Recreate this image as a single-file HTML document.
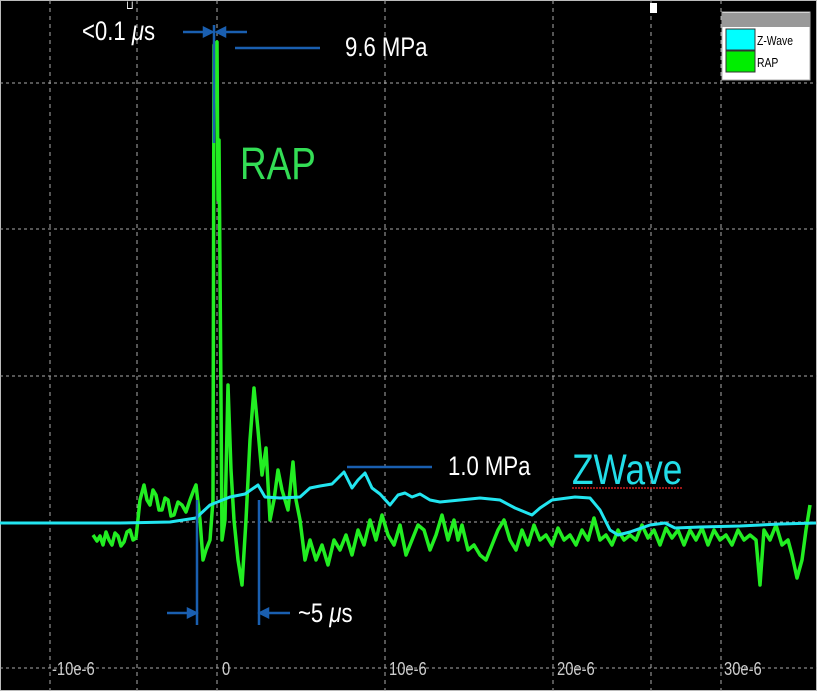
<!DOCTYPE html>
<html><head><style>
html,body{margin:0;padding:0;background:#000;}
body{width:817px;height:691px;overflow:hidden;position:relative;font-family:"Liberation Sans",sans-serif;}
.t{position:absolute;color:#fff;white-space:nowrap;transform:scaleX(0.82);transform-origin:left top;}
</style></head><body>
<svg width="817" height="691" style="position:absolute;left:0;top:0">
<rect x="0.5" y="0.5" width="816" height="690" fill="#000" stroke="#bbb"/>
<g stroke="#aaa" stroke-width="1" stroke-dasharray="4,4">
<line x1="50" y1="0" x2="50" y2="691"/><line x1="137" y1="0" x2="137" y2="691"/>
<line x1="217" y1="0" x2="217" y2="691"/><line x1="385" y1="0" x2="385" y2="691"/>
<line x1="553" y1="0" x2="553" y2="691"/><line x1="651" y1="0" x2="651" y2="691"/>
<line x1="721" y1="0" x2="721" y2="691"/>
</g>
<g stroke="#aaa" stroke-width="1" stroke-dasharray="3,3">
<line x1="0" y1="83" x2="817" y2="83"/><line x1="0" y1="229" x2="817" y2="229"/>
<line x1="0" y1="376" x2="817" y2="376"/><line x1="0" y1="522" x2="817" y2="522"/>
<line x1="0" y1="668" x2="817" y2="668"/>
</g>
<polyline fill="none" stroke="#22ee22" stroke-width="3.5" stroke-linejoin="round" points="93,535 97,541 100,536 103,545 106,532 109,540 112,545 115,533 118,536 121,546 124,542 127,532 130,530 133,540 136,538 140,500 144,485 147,500 150,505 153,490 156,495 159,510 162,510 165,498 168,500 171,516 174,515 178,502 182,505 186,512 190,500 193,492 196,485 200,520 203,560 206,550 210,540 213,500 214,45 217,42 218,200 219,140 221,400 222,540 225,520 228,385 231,470 234,520 238,560 242,585 246,520 250,440 254,388 258,430 262,475 266,448 270,520 274,500 278,470 282,490 288,510 293,462 296,500 300,520 305,560 310,540 316,560 322,545 328,565 334,540 340,550 346,535 352,555 358,530 364,545 370,520 376,540 382,515 388,535 394,545 400,525 406,555 412,540 418,525 424,530 430,550 436,535 442,515 448,540 454,520 458,540 462,525 468,550 474,545 480,555 486,560 492,545 498,530 504,520 510,540 516,550 522,530 528,545 534,525 540,540 546,535 552,545 558,528 564,540 570,535 576,545 582,530 588,540 594,518 600,540 606,535 612,545 618,530 624,540 630,535 636,540 642,525 648,538 654,530 660,545 666,528 672,538 678,530 684,545 690,530 696,540 702,528 708,545 714,530 720,540 726,535 732,545 738,530 744,540 750,535 756,540 760,585 764,530 770,540 776,525 782,545 788,540 792,555 797,578 802,560 806,530 810,505"/>
<polyline fill="none" stroke="#22e5f0" stroke-width="3" stroke-linejoin="round" points="0,523 120,523 170,522 196,518 210,505 230,497 245,494 258,485 265,497 280,498 300,497 310,488 320,486 332,484 344,472 352,488 358,480 365,473 372,488 380,494 390,505 398,495 405,493 412,497 420,494 430,500 440,502 460,500 480,498 500,500 515,508 532,515 540,508 552,500 575,497 590,498 600,510 610,530 618,535 630,532 650,525 665,523 675,528 700,527 740,526 780,524 816,523"/>
<g stroke="#1a5fb0" stroke-width="2.5" fill="#1a5fb0">
<line x1="214" y1="25" x2="214" y2="143"/>
<line x1="183" y1="32" x2="210" y2="32"/><polygon points="212,32 204,28 204,36"/>
<line x1="222" y1="32" x2="247" y2="32"/><polygon points="217,32 225,28 225,36"/>
<line x1="235" y1="48" x2="320" y2="48"/>
<line x1="347" y1="467" x2="432" y2="467"/>
<line x1="197" y1="500" x2="197" y2="625"/><line x1="259" y1="500" x2="259" y2="625"/>
<line x1="167" y1="613" x2="192" y2="613"/><polygon points="196,613 188,609 188,617"/>
<line x1="265" y1="613" x2="290" y2="613"/><polygon points="260,613 268,609 268,617"/>
</g>
<line x1="572" y1="488" x2="682" y2="488" stroke="#d02020" stroke-width="1.5" stroke-dasharray="2,1"/>
<rect x="650" y="3" width="7" height="10" fill="#fff"/>
<rect x="722" y="12" width="88" height="68" fill="#fff" stroke="#aaa"/>
<rect x="722" y="13" width="88" height="14" fill="#999"/>
<rect x="726" y="29" width="29" height="21" fill="#00ffff" stroke="#333"/>
<rect x="726" y="51" width="29" height="21" fill="#00ee00" stroke="#333"/>
<text x="757" y="45" font-size="13" fill="#000" font-family="Liberation Sans" transform="translate(757,0) scale(0.8,1) translate(-757,0)">Z-Wave</text>
<text x="757" y="67" font-size="13" fill="#000" font-family="Liberation Sans" transform="translate(757,0) scale(0.8,1) translate(-757,0)">RAP</text>
</svg>
<div class="t" style="left:126px;top:-2px;font-size:12px;">⊔</div>
<div class="t" style="left:82px;top:16px;font-size:27px;">&lt;0.1 <i>μ</i>s</div>
<div class="t" style="left:345px;top:32px;font-size:27px;">9.6 MPa</div>
<div class="t" style="left:240px;top:138px;font-size:45px;color:#33dd55;">RAP</div>
<div class="t" style="left:448px;top:451px;font-size:27px;">1.0 MPa</div>
<div class="t" style="left:572px;top:446px;font-size:43px;color:#22dde8;">ZWave</div>
<div class="t" style="left:298px;top:598px;font-size:27px;">~5 <i>μ</i>s</div>
<div class="t" style="left:52px;top:659px;font-size:18px;color:#ccc;">-10e-6</div>
<div class="t" style="left:222px;top:659px;font-size:18px;color:#ccc;">0</div>
<div class="t" style="left:389px;top:659px;font-size:18px;color:#ccc;">10e-6</div>
<div class="t" style="left:557px;top:659px;font-size:18px;color:#ccc;">20e-6</div>
<div class="t" style="left:724px;top:659px;font-size:18px;color:#ccc;">30e-6</div>
</body></html>
